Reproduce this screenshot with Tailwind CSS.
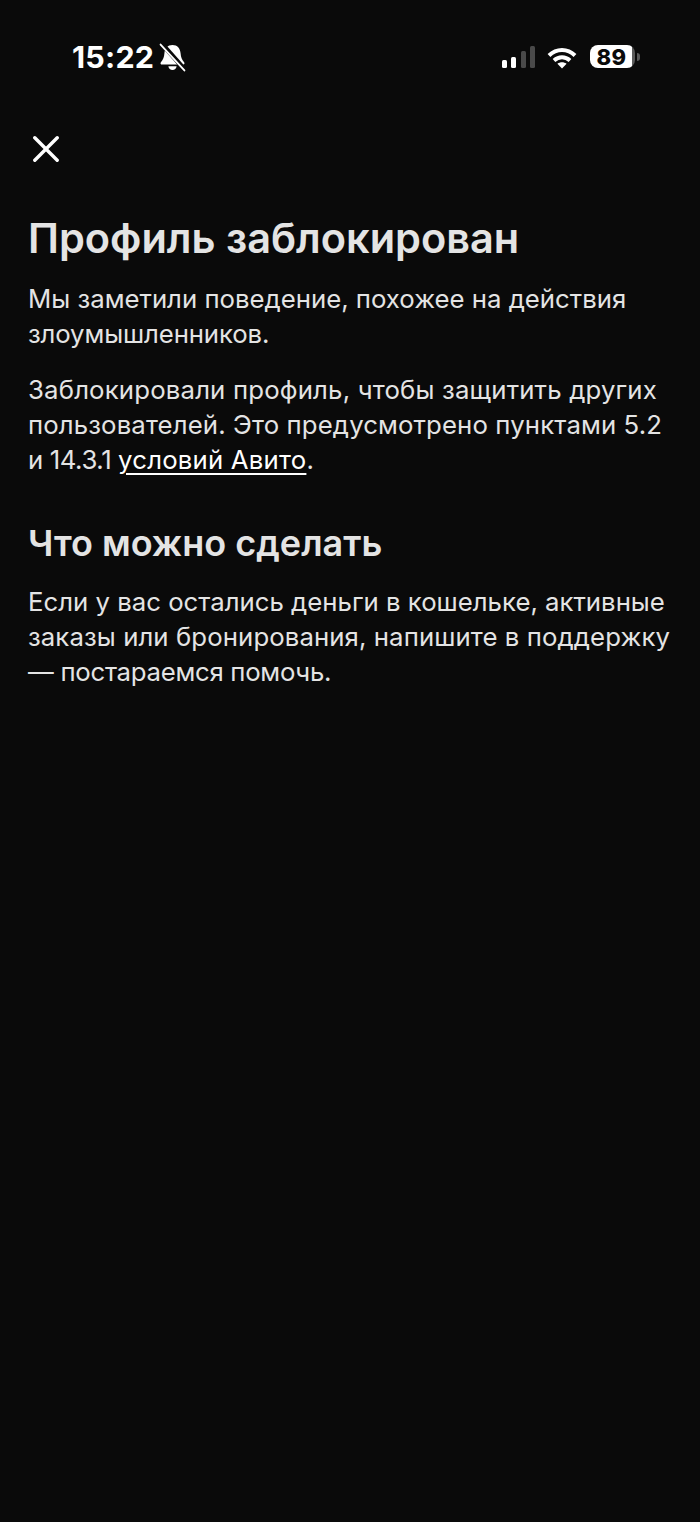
<!DOCTYPE html>
<html lang="ru">
<head>
  <meta charset="UTF-8">
  <meta name="viewport" content="width=device-width, initial-scale=1.0">
  <title>Профиль заблокирован</title>
  <script src="https://cdn.jsdelivr.net/npm/@tailwindcss/browser@4"></script>
</head>
<body class="bg-[#0a0a0a] font-['Inter',sans-serif]">
  <div class="w-[700px] h-[1522px] overflow-hidden">

    <!-- status bar -->
    <div class="h-[136px] pl-[72px] pr-[60px] pt-[40px] flex justify-between items-start">
      <div class="flex items-center h-[34px] gap-[5px]">
        <span class="text-white text-[30.5px] font-bold leading-[34px] tracking-[0.2px]">15:22</span>
        <svg width="27" height="29" viewBox="0 0 26 28">
          <path d="M13 2C8.300 2 5.500 5.400 5.200 10c-.3 4-1.200 6-3.400 8.500-.8 1-.3 2.300 1 2.300h20.400c1.300 0 1.800-1.300 1-2.300-2.200-2.500-3.100-4.500-3.400-8.500C20.500 5.400 17.700 2 13 2z" fill="#fff"/>
          <path d="M9 22.500h8c-.3 2.200-1.900 3.600-4 3.600s-3.700-1.400-4-3.600z" fill="#fff"/>
          <path d="M3 1l22 25" stroke="#0a0a0a" stroke-width="4.500"/>
          <path d="M1.500 1.500l23 25" stroke="#fff" stroke-width="1.800" stroke-linecap="round"/>
        </svg>
      </div>
      <div class="flex items-start h-[34px] mt-[5px]">
        <div class="flex items-end gap-[4.500px] h-[23px]">
          <div class="w-[5px] h-[8px] rounded-[1.500px] bg-white"></div>
          <div class="w-[5px] h-[11px] rounded-[1.500px] bg-white"></div>
          <div class="w-[5px] h-[17px] rounded-[1.500px] bg-[#4a4a4a]"></div>
          <div class="w-[5px] h-[22px] rounded-[1.500px] bg-[#4a4a4a]"></div>
        </div>
        <svg class="ml-[12px] mt-[2px]" width="30" height="22" viewBox="0 0 30 22" fill="none" stroke="#fff" stroke-width="4">
          <path d="M2 8.500C9.500 1.200 20.500 1.200 28 8.500"/>
          <path d="M7 13.500c4.800-4.300 11.200-4.300 16 0"/>
          <path d="M15 21.500l-4.600-4.800c2.800-2 6.400-2 9.200 0z" fill="#fff" stroke="none"/>
        </svg>
        <div class="ml-[13px] w-[45px] h-[23px] rounded-[8px] bg-[linear-gradient(to_right,#fff_93%,#5a5a5a_93%)] flex items-center justify-center pr-[2px] text-[#0a0a0a] text-[22px] font-extrabold leading-none tracking-[0.5px]">89</div>
        <div class="ml-[2px] mt-[8px] w-[3px] h-[8px] rounded-r-[3px] bg-[#5a5a5a]"></div>
      </div>
    </div>

    <!-- close -->
    <div class="pl-[33px] h-[76px]">
      <svg width="26" height="26" viewBox="0 0 26 26" fill="none" stroke="#fff" stroke-width="3.400" stroke-linecap="round">
        <path d="M1.800 1.800l22.400 22.400M24.200 1.800L1.800 24.200"/>
      </svg>
    </div>

    <!-- content -->
    <div class="px-[28px] text-[#e4e4e4]">
      <h1 class="text-[41.5px] font-semibold leading-[52px] text-[#e4e4e4]">Профиль заблокирован</h1>
      <p class="mt-[17px] text-[25.75px] leading-[35px]">Мы заметили поведение, похожее на действия<br><span class="tracking-[-0.12px]">злоумышленников.</span></p>
      <p class="mt-[21px] text-[25.75px] leading-[35px]"><span class="tracking-[0.17px]">Заблокировали профиль, чтобы защитить других</span><br><span class="tracking-[0.12px]">пользователей. Это предусмотрено пунктами 5.2</span><br><span class="tracking-[-0.4px]">и 14.3.1 </span><span class="text-white tracking-[0.2px] underline underline-offset-[4px] decoration-[2px]">условий Авито</span>.</p>
      <h2 class="mt-[44px] text-[36px] font-semibold leading-[44px] text-[#e4e4e4]">Что можно сделать</h2>
      <p class="mt-[19px] text-[25.75px] leading-[35px]">Если у вас остались деньги в кошельке, активные<br><span class="tracking-[0.09px]">заказы или бронирования, напишите в поддержку</span><br><span class="tracking-[-0.28px]">— постараемся помочь.</span></p>
    </div>
  </div>
</body>
</html>
